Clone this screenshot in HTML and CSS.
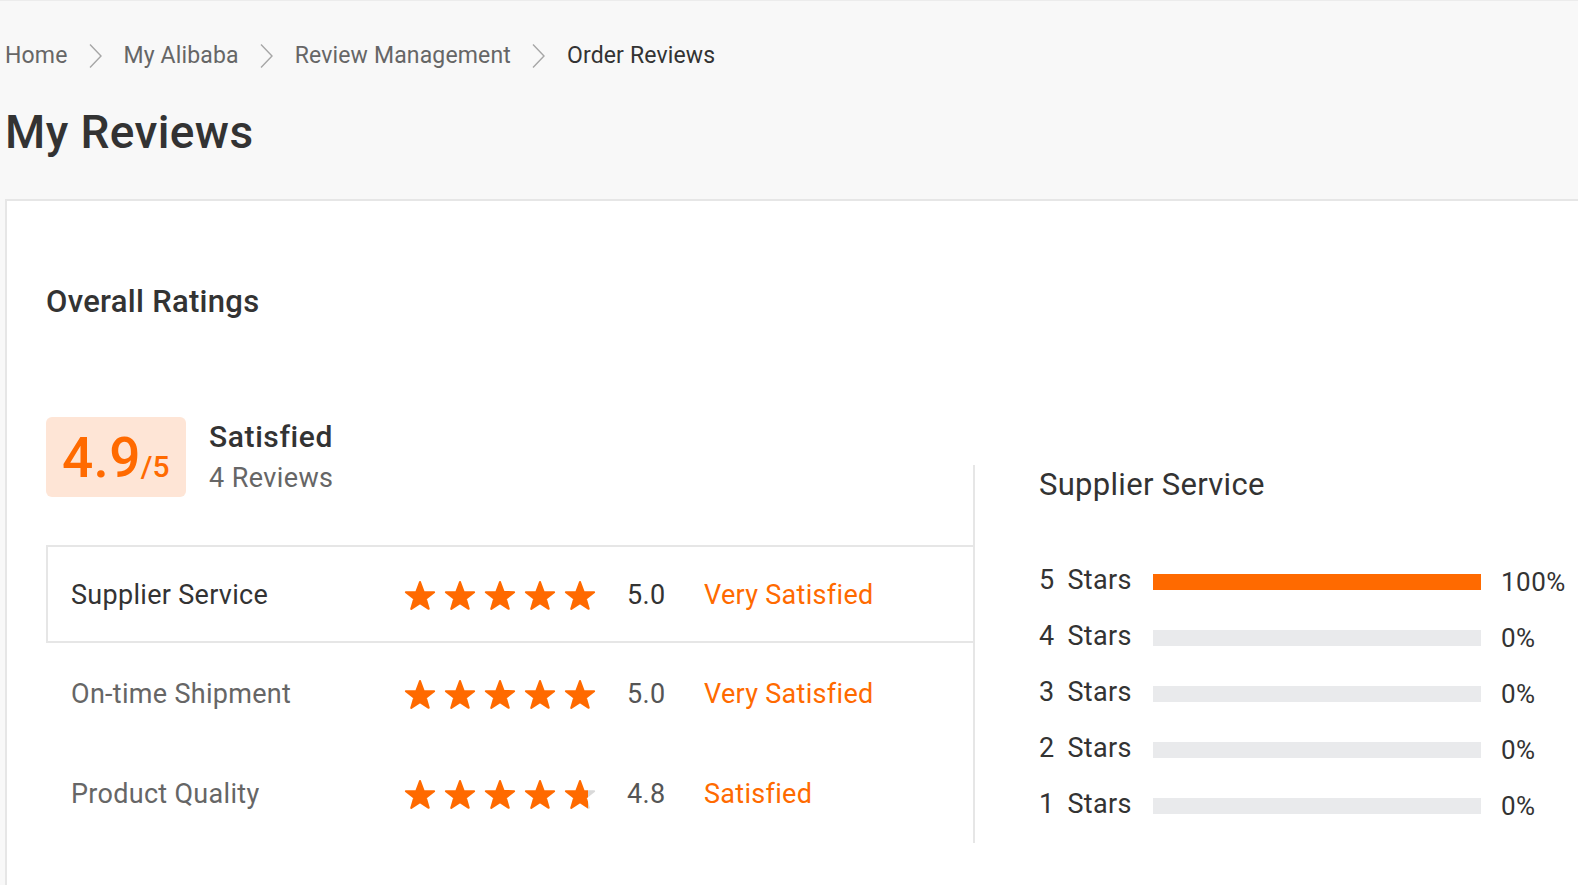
FILE: index.html
```html
<!DOCTYPE html>
<html lang="en">
<head>
<meta charset="utf-8">
<title>My Reviews</title>
<link rel="stylesheet" href="styles.css">
</head>
<body>
<header class="head">
  <nav class="crumbs">
    <a class="crumb">Home</a>
    <svg class="chev" viewBox="0 0 15 26"><polyline points="2,1.5 13,13 2,24.5"/></svg>
    <a class="crumb">My Alibaba</a>
    <svg class="chev" viewBox="0 0 15 26"><polyline points="2,1.5 13,13 2,24.5"/></svg>
    <a class="crumb">Review Management</a>
    <svg class="chev" viewBox="0 0 15 26"><polyline points="2,1.5 13,13 2,24.5"/></svg>
    <span class="crumb current">Order Reviews</span>
  </nav>
  <h1 class="title">My Reviews</h1>
</header>

<svg class="defs" width="0" height="0">
  <defs>
    <linearGradient id="partial" x1="0" y1="0" x2="1" y2="0">
      <stop offset="0.8" stop-color="#ff6a00"/>
      <stop offset="0.8" stop-color="#d9d9d9"/>
    </linearGradient>
    <polygon id="star-shape" points="50,0 62.2,33.6 97.55,34.55 69.6,56.4 79.39,90.45 50,71 20.61,90.45 30.4,56.4 2.45,34.55 37.8,33.6"/>
  </defs>
</svg>

<section class="card">
  <h2 class="card-title">Overall Ratings</h2>
  <div class="ratings">
    <div class="left">
      <div class="summary">
        <div class="score-box"><span class="score">4.9</span><span class="score-of">/5</span></div>
        <div class="summary-text">
          <div class="verdict">Satisfied</div>
          <div class="count">4 Reviews</div>
        </div>
      </div>
      <div class="rows">
        <div class="row active">
          <div class="row-label">Supplier Service</div>
          <div class="stars">
            <svg class="star" viewBox="-4 -4 108 99"><use href="#star-shape"/></svg>
            <svg class="star" viewBox="-4 -4 108 99"><use href="#star-shape"/></svg>
            <svg class="star" viewBox="-4 -4 108 99"><use href="#star-shape"/></svg>
            <svg class="star" viewBox="-4 -4 108 99"><use href="#star-shape"/></svg>
            <svg class="star" viewBox="-4 -4 108 99"><use href="#star-shape"/></svg>
          </div>
          <div class="row-score">5.0</div>
          <div class="row-verdict">Very Satisfied</div>
        </div>
        <div class="row">
          <div class="row-label">On-time Shipment</div>
          <div class="stars">
            <svg class="star" viewBox="-4 -4 108 99"><use href="#star-shape"/></svg>
            <svg class="star" viewBox="-4 -4 108 99"><use href="#star-shape"/></svg>
            <svg class="star" viewBox="-4 -4 108 99"><use href="#star-shape"/></svg>
            <svg class="star" viewBox="-4 -4 108 99"><use href="#star-shape"/></svg>
            <svg class="star" viewBox="-4 -4 108 99"><use href="#star-shape"/></svg>
          </div>
          <div class="row-score">5.0</div>
          <div class="row-verdict">Very Satisfied</div>
        </div>
        <div class="row">
          <div class="row-label">Product Quality</div>
          <div class="stars">
            <svg class="star" viewBox="-4 -4 108 99"><use href="#star-shape"/></svg>
            <svg class="star" viewBox="-4 -4 108 99"><use href="#star-shape"/></svg>
            <svg class="star" viewBox="-4 -4 108 99"><use href="#star-shape"/></svg>
            <svg class="star" viewBox="-4 -4 108 99"><use href="#star-shape"/></svg>
            <svg class="star star-partial" viewBox="-4 -4 108 99"><use href="#star-shape"/></svg>
          </div>
          <div class="row-score">4.8</div>
          <div class="row-verdict">Satisfied</div>
        </div>
      </div>
    </div>

    <div class="right">
      <h3 class="right-title">Supplier Service</h3>
      <div class="bar-row">
        <div class="bar-label"><span>5</span><span>Stars</span></div>
        <div class="bar"><div class="bar-fill" style="width:100%"></div></div>
        <div class="pct">100%</div>
      </div>
      <div class="bar-row">
        <div class="bar-label"><span>4</span><span>Stars</span></div>
        <div class="bar"><div class="bar-fill" style="width:0%"></div></div>
        <div class="pct">0%</div>
      </div>
      <div class="bar-row">
        <div class="bar-label"><span>3</span><span>Stars</span></div>
        <div class="bar"><div class="bar-fill" style="width:0%"></div></div>
        <div class="pct">0%</div>
      </div>
      <div class="bar-row">
        <div class="bar-label"><span>2</span><span>Stars</span></div>
        <div class="bar"><div class="bar-fill" style="width:0%"></div></div>
        <div class="pct">0%</div>
      </div>
      <div class="bar-row">
        <div class="bar-label"><span>1</span><span>Stars</span></div>
        <div class="bar"><div class="bar-fill" style="width:0%"></div></div>
        <div class="pct">0%</div>
      </div>
    </div>
  </div>
</section>
</body>
</html>
```

FILE: styles.css
```css
html, body {
  margin: 0;
  padding: 0;
}

body {
  background: #f8f8f8;
  font-family: Roboto, "Liberation Sans", Arial, sans-serif;
  color: #333;
  letter-spacing: 0.3px;
  overflow: hidden;
}

.defs {
  position: absolute;
  width: 0;
  height: 0;
}

/* ---------- header ---------- */
.head {
  border-top: 1px solid #ececec;
  padding: 40px 0 40px 5px;
}

.crumbs {
  display: flex;
  align-items: center;
  height: 30px;
  font-size: 23px;
  line-height: 30px;
  color: #666;
  letter-spacing: 0.15px;
}

.crumb {
  color: #666;
  text-decoration: none;
}

.crumb.current {
  color: #333;
}

.chev {
  width: 15px;
  height: 26px;
  margin: 0 21px 0 20px;
  flex: none;
}

.chev polyline {
  fill: none;
  stroke: #a6a6a6;
  stroke-width: 1.4;
}

.title {
  margin: 34px 0 0;
  font-size: 46px;
  line-height: 54px;
  font-weight: 500;
  letter-spacing: 0.4px;
  color: #333;
}

/* ---------- card ---------- */
.card {
  margin-left: 5px;
  background: #fff;
  border-left: 2px solid #e6e6e6;
  border-top: 2px solid #e6e6e6;
  padding: 81px 0 80px 39px;
}

.card-title {
  margin: 0;
  font-size: 31px;
  line-height: 40px;
  font-weight: 500;
  color: #333;
}

.ratings {
  display: flex;
  align-items: flex-start;
  margin-top: 95px;
}

.left {
  width: 929px;
  flex: none;
}

.summary {
  display: flex;
  align-items: flex-start;
  height: 128px;
  background: linear-gradient(#e6e6e6, #e6e6e6) no-repeat right bottom / 2px 80px;
}

.score-box {
  box-sizing: border-box;
  width: 140px;
  height: 80px;
  padding: 14px 0 0 16px;
  background: #fee5d6;
  border-radius: 6px;
  display: flex;
  align-items: baseline;
  color: #ff6a00;
  font-weight: 500;
  letter-spacing: 0.3px;
}

.score {
  font-size: 55px;
  line-height: 54px;
}

.score-of {
  font-size: 30px;
  line-height: 30px;
  letter-spacing: 0;
}

.summary-text {
  margin-left: 23px;
  padding-top: 2px;
}

.verdict {
  font-size: 30px;
  line-height: 36px;
  font-weight: 500;
  letter-spacing: 0.6px;
  color: #333;
}

.count {
  margin-top: 6px;
  font-size: 27px;
  line-height: 34px;
  letter-spacing: 0.4px;
  color: #666;
}

/* rows */
.row {
  box-sizing: border-box;
  display: flex;
  align-items: center;
  height: 100px;
  padding-top: 2px;
  padding-left: 25px;
  border-right: 2px solid #e6e6e6;
  font-size: 27px;
}

.row.active {
  height: 98px;
  padding-left: 23px;
  border: 2px solid #e6e6e6;
}

.row-label {
  width: 333px;
  flex: none;
  color: #666;
}

.row.active .row-label {
  color: #333;
}

.stars {
  display: flex;
  gap: 8px;
  flex: none;
}

.star {
  width: 32px;
  height: 31px;
  display: block;
  fill: #ff6a00;
  stroke: #ff6a00;
  stroke-width: 7;
  stroke-linejoin: round;
}

.star-partial {
  fill: url(#partial);
  stroke: url(#partial);
}

.row-score {
  margin-left: 31px;
  width: 77px;
  flex: none;
  color: #555;
}

.row.active .row-score {
  color: #333;
}

.row-verdict {
  color: #ff6a00;
}

/* ---------- right column ---------- */
.right {
  margin-left: 64px;
  padding-top: 48px;
  flex: 1;
}

.right-title {
  margin: 0 0 49px;
  font-size: 31px;
  line-height: 40px;
  font-weight: 400;
  color: #333;
}

.bar-row {
  display: flex;
  align-items: center;
  height: 56px;
}

.bar-label {
  width: 114px;
  flex: none;
  display: flex;
  gap: 13px;
  font-size: 27px;
  line-height: 34px;
  color: #333;
  margin-bottom: 5px;
}

.bar {
  width: 328px;
  height: 16px;
  flex: none;
  background: #e9eaec;
}

.bar-fill {
  height: 100%;
  background: #ff6a00;
}

.pct {
  margin-left: 20px;
  font-size: 26px;
  line-height: 34px;
  letter-spacing: 0.5px;
  color: #333;
}
```
